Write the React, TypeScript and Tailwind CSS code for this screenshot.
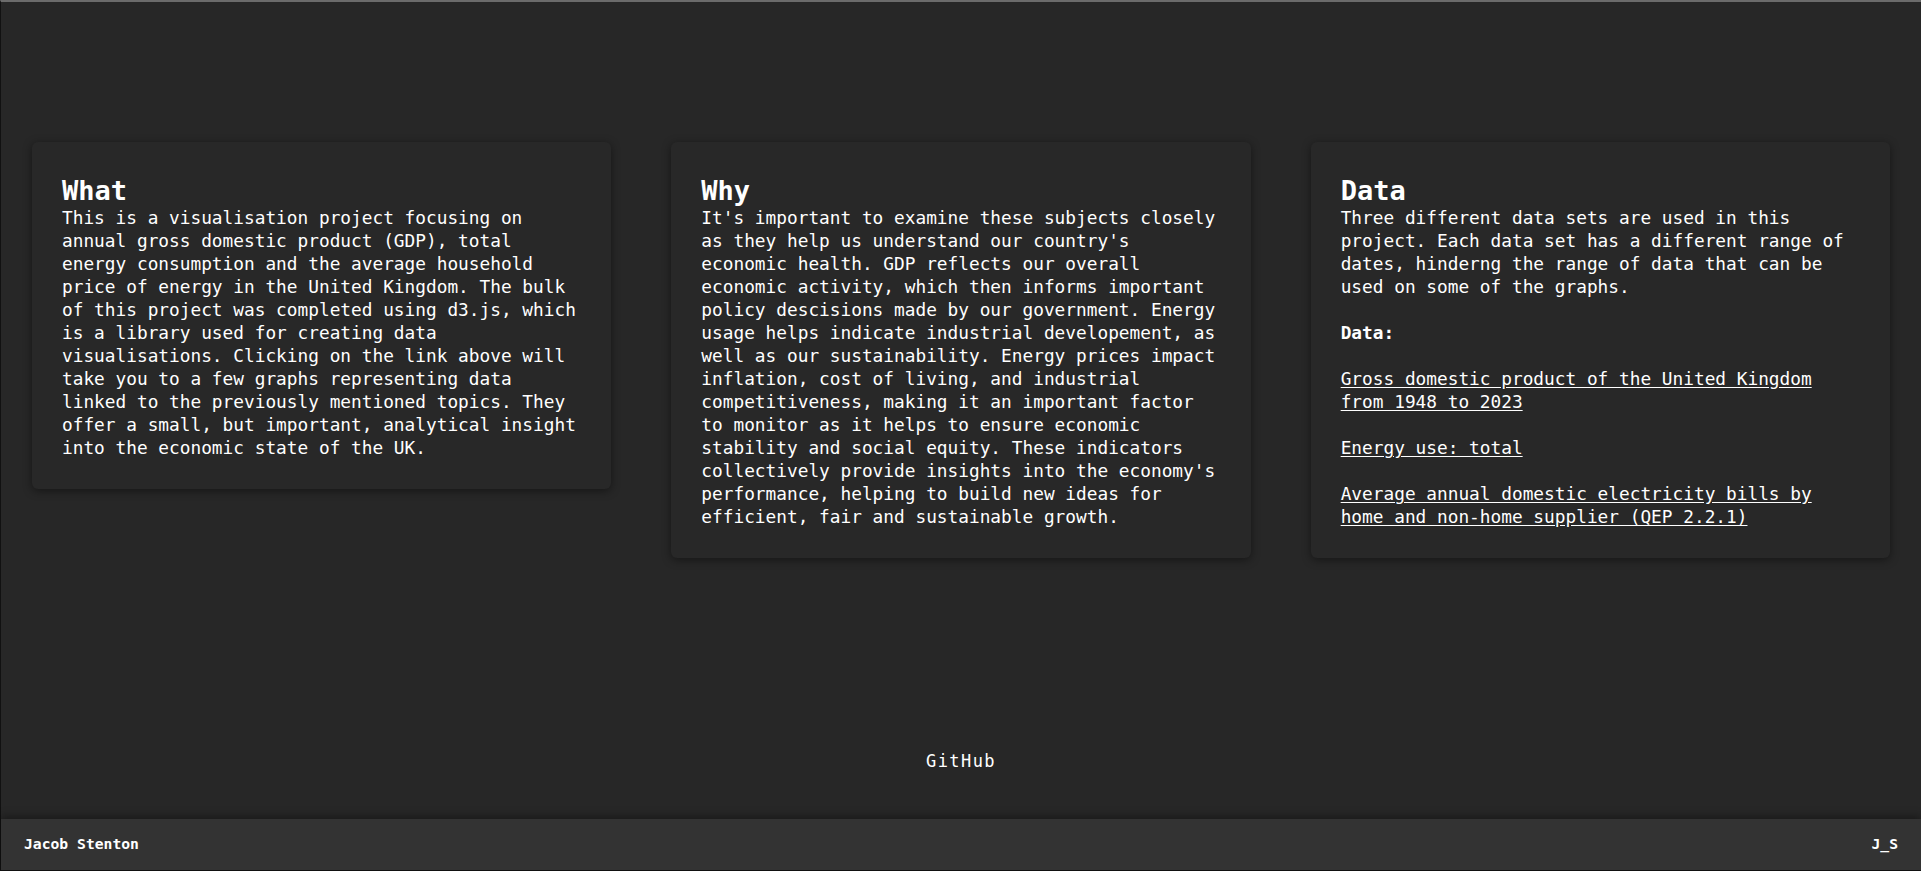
import type { ReactNode } from 'react'

const mono = { fontFamily: '"DejaVu Sans Mono", "Liberation Mono", monospace' }

function Card({ title, children }: { title: string; children: ReactNode }) {
  return (
    <div className="flex-1 min-w-0 rounded-md bg-[#282828] px-[30px] pt-[33px] pb-[30px] shadow-[0_2px_10px_rgba(0,0,0,0.45)]">
      <h2 className="text-[27px] font-bold leading-[31px] text-white">{title}</h2>
      <div className="text-[17.8px] leading-[23px] text-white">{children}</div>
    </div>
  )
}

export default function App() {
  return (
    <div
      style={mono}
      className="flex h-screen flex-col border-t-2 border-l border-t-[#6b6b6b] border-l-[#111111] bg-[#272727]"
    >
      <main className="flex flex-1 flex-col">
        {/* Cards */}
        <section className="flex items-start gap-[60px] px-[31px] pt-[140px]">
          <Card title="What">
            <p>
              This is a visualisation project focusing on annual gross domestic product (GDP), total
              energy consumption and the average household price of energy in the United Kingdom. The
              bulk of this project was completed using d3.js, which is a library used for creating data
              visualisations. Clicking on the link above will take you to a few graphs representing data
              linked to the previously mentioned topics. They offer a small, but important, analytical
              insight into the economic state of the UK.
            </p>
          </Card>
          <Card title="Why">
            <p>
              It's important to examine these subjects closely as they help us understand our country's
              economic health. GDP reflects our overall economic activity, which then informs important
              policy descisions made by our government. Energy usage helps indicate industrial
              developement, as well as our sustainability. Energy prices impact inflation, cost of
              living, and industrial competitiveness, making it an important factor to monitor as it
              helps to ensure economic stability and social equity. These indicators collectively
              provide insights into the economy's performance, helping to build new ideas for efficient,
              fair and sustainable growth.
            </p>
          </Card>
          <Card title="Data">
            <p>
              Three different data sets are used in this project. Each data set has a different range of
              dates, hinderng the range of data that can be used on some of the graphs.
            </p>
            <p className="mt-[23px] font-bold">Data:</p>
            <p className="mt-[23px]">
              <a href="#" className="text-white underline underline-offset-2">
                Gross domestic product of the United Kingdom from 1948 to 2023
              </a>
            </p>
            <p className="mt-[23px]">
              <a href="#" className="text-white underline underline-offset-2">
                Energy use: total
              </a>
            </p>
            <p className="mt-[23px]">
              <a href="#" className="text-white underline underline-offset-2">
                Average annual domestic electricity bills by home and non-home supplier (QEP 2.2.1)
              </a>
            </p>
          </Card>
        </section>

        <div className="mt-auto pb-[45px] text-center">
          <a href="#" className="text-[17px] leading-[20px] tracking-[1.4px] text-white">
            GitHub
          </a>
        </div>
      </main>

      {/* Footer */}
      <footer className="flex h-[52px] items-center justify-between border-b border-b-[#111111] bg-[#333333] px-[23px] text-[14.7px] font-bold text-white shadow-[0_-3px_8px_rgba(0,0,0,0.35)]">
        <span>Jacob Stenton</span>
        <span>J_S</span>
      </footer>
    </div>
  )
}
